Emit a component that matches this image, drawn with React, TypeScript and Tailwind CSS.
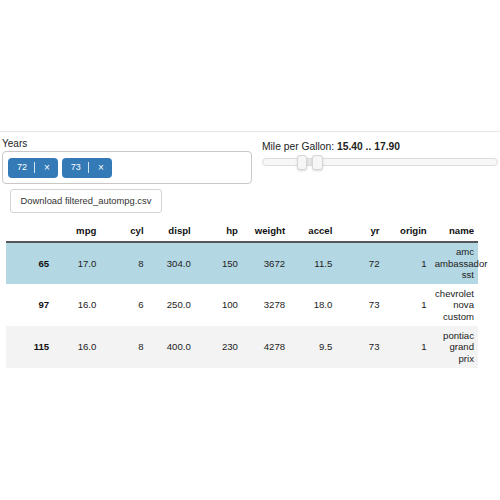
const rows = [
  { idx: 65, mpg: '17.0', cyl: 8, displ: '304.0', hp: 150, weight: 3672, accel: '11.5', yr: 72, origin: 1, name: ['amc', 'ambassador', 'sst'], bg: 'bg-[#b3d7e3]' },
  { idx: 97, mpg: '16.0', cyl: 6, displ: '250.0', hp: 100, weight: 3278, accel: '18.0', yr: 73, origin: 1, name: ['chevrolet', 'nova', 'custom'], bg: 'bg-white' },
  { idx: 115, mpg: '16.0', cyl: 8, displ: '400.0', hp: 230, weight: 4278, accel: '9.5', yr: 73, origin: 1, name: ['pontiac', 'grand', 'prix'], bg: 'bg-[#f3f3f3]' },
];

const headers = ['', 'mpg', 'cyl', 'displ', 'hp', 'weight', 'accel', 'yr', 'origin', 'name'];

const Tag = ({ label }: { label: string }) => (
  <div className="flex items-center h-[20px] pl-[9px] pr-[8px] rounded-[4px] bg-[#337ab7] text-white text-[9px] leading-none">
    <span>{label}</span>
    <span className="ml-[7px] mr-[9px] h-[11px] w-px bg-white/80" />
    <span className="text-[10px]">×</span>
  </div>
);

export default function App() {
  return (
    <div className="w-[500px] h-[500px] bg-white text-[#222] overflow-hidden" style={{ fontFamily: '"Liberation Sans", Arial, sans-serif' }}>
      <div className="mt-[131px] border-t border-[#e6e6e6] flex">
        <div className="w-[252px] pl-[2px] pt-[6px]">
          <div className="text-[10px] leading-[12px] text-[#222]">Years</div>
          <div className="mt-px h-[33px] border border-[#c8c8c8] rounded-[4px] flex items-center gap-[4px] pl-[5px]">
            <Tag label="72" />
            <Tag label="73" />
          </div>
          <button className="block mt-[5px] ml-[8px] h-[24px] w-[152px] border border-[#d4d4d4] rounded-[3px] bg-white text-[9.4px] leading-none whitespace-nowrap text-[#333]">
            Download filtered_autompg.csv
          </button>
        </div>
        <div className="flex-1 pl-[10px] pr-[2px] pt-[9px]">
          <div className="text-[10.3px] leading-[12px] text-[#222]">
            Mile per Gallon: <span className="font-bold">15.40 .. 17.90</span>
          </div>
          <div className="relative mt-[5px] h-[8px] rounded-full border border-[#dcdcdc] bg-[#f7f7f7]">
            <div className="absolute left-[42px] w-[10px] top-0 bottom-0 bg-[#e6e6e6]" />
            <div className="absolute left-[34px] top-[-4px] w-[10px] h-[15px] rounded-[3px] border border-[#d6d6d6] bg-[#f6f6f6] shadow-[0_1px_2px_rgba(0,0,0,0.15)]" />
            <div className="absolute left-[49px] top-[-4px] w-[11px] h-[15px] rounded-[3px] border border-[#d6d6d6] bg-[#f6f6f6] shadow-[0_1px_2px_rgba(0,0,0,0.15)]" />
          </div>
        </div>
      </div>

      <div className="mt-[8px] ml-[6px] w-[472px]">
        <table className="w-[472px] table-fixed border-collapse text-[9.6px] leading-[11.5px]">
          <thead>
            <tr className="border-b-2 border-[#555]">
              {headers.map((h, i) => (
                <th key={i} className="text-right font-bold pr-[4px] pt-[4px] pb-[4px] leading-[12px] text-[#111]">{h}</th>
              ))}
            </tr>
          </thead>
          <tbody>
            {rows.map((r) => (
              <tr key={r.idx} className={`${r.bg} h-[42px]`}>
                <td className="text-right pr-[4px] font-bold text-[#111]">{r.idx}</td>
                <td className="text-right pr-[4px]">{r.mpg}</td>
                <td className="text-right pr-[4px]">{r.cyl}</td>
                <td className="text-right pr-[4px]">{r.displ}</td>
                <td className="text-right pr-[4px]">{r.hp}</td>
                <td className="text-right pr-[4px]">{r.weight}</td>
                <td className="text-right pr-[4px]">{r.accel}</td>
                <td className="text-right pr-[4px]">{r.yr}</td>
                <td className="text-right pr-[4px]">{r.origin}</td>
                <td className="text-right pr-[4px] pl-[4px] py-[2px]">
                  {r.name.map((n) => (
                    <div key={n}>{n}</div>
                  ))}
                </td>
              </tr>
            ))}
          </tbody>
        </table>
      </div>
    </div>
  );
}
